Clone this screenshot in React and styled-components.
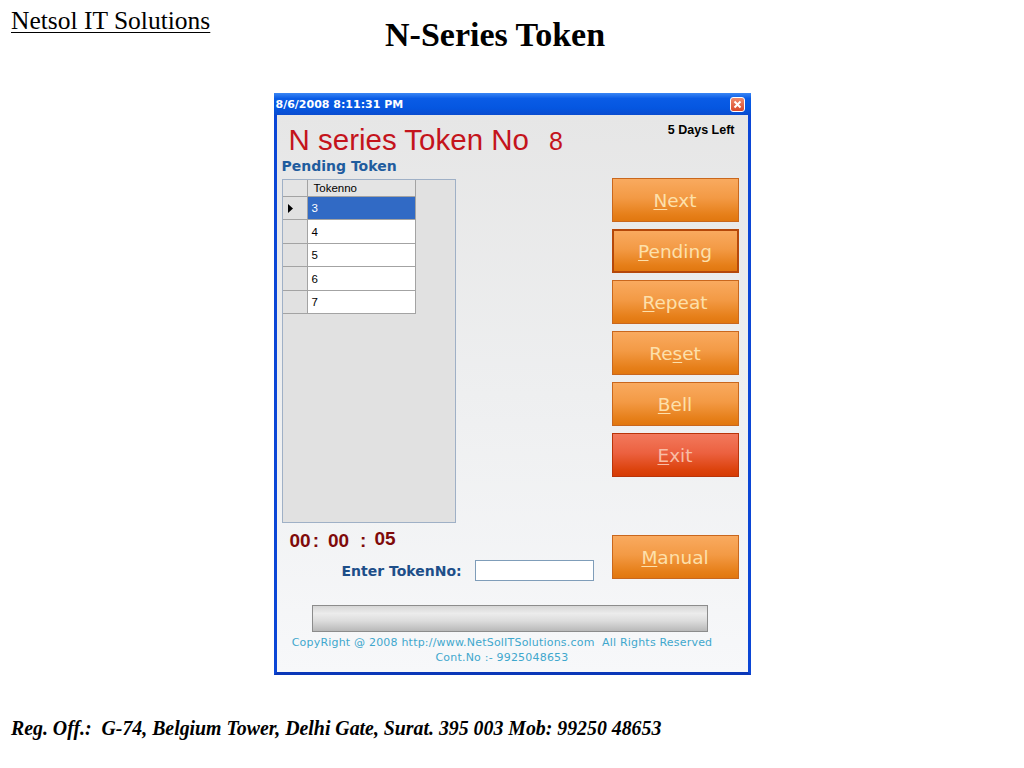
import React from "react";
import styled, { createGlobalStyle, css } from "styled-components";

const GlobalStyle = createGlobalStyle`
  html, body {
    margin: 0;
    padding: 0;
    background: #ffffff;
  }
  * {
    box-sizing: border-box;
  }
`;

const Page = styled.div`
  width: 1024px;
  height: 768px;
  display: flex;
  flex-direction: column;
  overflow: hidden;
`;

const Header = styled.header`
  height: 93px;
  display: flex;
  align-items: flex-start;
`;

const Company = styled.div`
  flex: 0 0 385px;
  padding: 7px 0 0 11px;
  font-family: "Liberation Serif", serif;
  font-size: 25.5px;
  line-height: 28px;
  color: #000;
  text-decoration: underline;
  text-underline-offset: 3px;
  text-decoration-thickness: 1px;
`;

const SlideTitle = styled.h1`
  margin: 0;
  padding-top: 17px;
  font-family: "Liberation Serif", serif;
  font-weight: bold;
  font-size: 34px;
  line-height: 36px;
  color: #000;
`;

const Window = styled.div`
  width: 477px;
  height: 582px;
  margin: 0 auto;
  display: flex;
  flex-direction: column;
  border: 3px solid #0b46d6;
  border-top: none;
  border-bottom-color: #0a37b8;
  background: #0b46d6;
`;

const TitleBar = styled.div`
  height: 22px;
  margin: 0 -3px;
  padding: 0 6px 0 2px;
  display: flex;
  align-items: center;
  justify-content: space-between;
  background: linear-gradient(#3a86f4, #0a5ce6 25%, #0556e0 70%, #0a4ccf);
  font-family: "DejaVu Sans", sans-serif;
  font-weight: bold;
  font-size: 11px;
  color: #ffffff;
`;

const CloseButton = styled.div`
  width: 15px;
  height: 15px;
  border: 1px solid #ffffff;
  border-radius: 3px;
  background: linear-gradient(#f08a6c, #d9482a);
  display: flex;
  align-items: center;
  justify-content: center;
`;

const Body = styled.div`
  flex: 1;
  background: linear-gradient(#e6e6e6, #eeeff0 50%, #f7f8fa);
  display: flex;
  flex-direction: column;
  overflow: hidden;
`;

const TopRow = styled.div`
  display: flex;
  justify-content: space-between;
  align-items: flex-start;
  padding: 0 13px 0 12px;
`;

const Heading = styled.div`
  margin-top: 11px;
  font-family: "Liberation Sans", sans-serif;
  font-size: 29.5px;
  line-height: 28px;
  color: #c4141c;
  display: flex;
  align-items: baseline;
`;

const TokenNumber = styled.span`
  margin-left: 20px;
  font-size: 25px;
`;

const DaysLeft = styled.div`
  margin-top: 8px;
  font-family: "Liberation Sans", sans-serif;
  font-weight: bold;
  font-size: 12.5px;
  line-height: 15px;
  color: #000;
`;

const Main = styled.div`
  margin-top: 3px;
  display: flex;
  justify-content: space-between;
  padding: 0 9px 0 5px;
`;

const LeftCol = styled.div`
  display: flex;
  flex-direction: column;
`;

const SectionLabel = styled.div`
  font-family: "DejaVu Sans", sans-serif;
  font-weight: bold;
  font-size: 14px;
  line-height: 16px;
  color: #1f5c9e;
`;

const GridPanel = styled.div`
  margin-top: 5px;
  width: 174px;
  height: 344px;
  border: 1px solid #9fb0c6;
  background: #e1e1e1;
`;

const GridTable = styled.div`
  display: grid;
  grid-template-columns: 25px 107px;
  width: 133px;
  border-right: 1px solid #a3a3a3;
`;

const Cell = styled.div`
  height: ${(p) => p.$h}px;
  display: flex;
  align-items: center;
  padding-left: ${(p) => (p.$rowHead ? 5 : 4)}px;
  border-bottom: 1px solid #a3a3a3;
  border-right: ${(p) => (p.$rowHead ? "1px solid #a3a3a3" : "none")};
  font-family: "Liberation Sans", sans-serif;
  font-size: 11.5px;
  color: #000;
  background: #ffffff;
  ${(p) =>
    p.$rowHead &&
    css`
      background: #e1e1e1;
    `}
  ${(p) =>
    p.$header &&
    css`
      background: #e4e4e4;
      padding-left: 6px;
    `}
  ${(p) =>
    p.$selected &&
    css`
      background: #316ac5;
      color: #ffffff;
    `}
`;

const Timer = styled.div`
  margin-top: 7px;
  padding-left: 8px;
  display: flex;
  align-items: flex-end;
  font-family: "Liberation Sans", sans-serif;
  font-weight: bold;
  font-size: 19px;
  line-height: 22px;
  color: #7f0a0a;
`;

const TimerPart = styled.span`
  margin-left: ${(p) => p.$gap || 0}px;
  position: relative;
  top: ${(p) => (p.$raised ? -2 : 0)}px;
`;

const EnterRow = styled.div`
  margin-top: 8px;
  margin-left: 60px;
  display: flex;
  align-items: center;
  gap: 13px;
`;

const EnterLabel = styled.label`
  font-family: "DejaVu Sans", sans-serif;
  font-weight: bold;
  font-size: 14px;
  color: #1d4e89;
`;

const TokenInput = styled.input`
  width: 119px;
  height: 21px;
  border: 1px solid #7f9db9;
  background: #ffffff;
  outline: none;
  padding: 0 3px;
`;

const RightCol = styled.div`
  padding-top: 20px;
  display: flex;
  flex-direction: column;
  gap: 7px;
`;

const ActionButton = styled.button`
  width: 127px;
  height: 44px;
  margin-top: ${(p) => p.$offset || 0}px;
  padding: 0;
  border: 1px solid #c9671d;
  background: linear-gradient(#f9aa5f, #f39a45 45%, #e67f19 85%, #e1770f);
  font-family: "DejaVu Sans", sans-serif;
  font-size: 18.5px;
  color: #fde0ab;
  cursor: pointer;
  u {
    text-underline-offset: 2px;
  }
  ${(p) =>
    p.$focused &&
    css`
      border: 2px solid #b5480a;
    `}
  ${(p) =>
    p.$danger &&
    css`
      border-color: #b9340a;
      background: linear-gradient(#f2795c, #ec6140 45%, #dc430d 85%, #d63b05);
      color: #f8bda6;
    `}
`;

const ProgressBar = styled.div`
  margin: 24px 0 0 35px;
  width: 396px;
  height: 27px;
  border: 1px solid #8c8c8c;
  background: linear-gradient(#d6d6d6, #ececec 30%, #dcdcdc 60%, #b9b9b9);
`;

const Copyright = styled.div`
  margin-top: 3px;
  padding-right: 20px;
  text-align: center;
  font-family: "DejaVu Sans", sans-serif;
  font-size: 11px;
  line-height: 15px;
  letter-spacing: 0.2px;
  color: #3fa7cd;
`;

const Footer = styled.footer`
  margin-top: 42px;
  padding-left: 11px;
`;

const Address = styled.div`
  display: inline-block;
  font-family: "Liberation Serif", serif;
  font-weight: bold;
  font-style: italic;
  font-size: 21px;
  line-height: 22px;
  color: #000;
  white-space: pre;
  transform: scaleX(0.944);
  transform-origin: left center;
`;

const tokens = [
  { no: "3", h: 23 },
  { no: "4", h: 24 },
  { no: "5", h: 23 },
  { no: "6", h: 24 },
  { no: "7", h: 23 },
];

const buttons = [
  { label: "Next", u: 0 },
  { label: "Pending", u: 0, focused: true },
  { label: "Repeat", u: 0 },
  { label: "Reset", u: 2 },
  { label: "Bell", u: 0 },
  { label: "Exit", u: 0, danger: true },
];

const Mnemonic = ({ label, u }) => (
  <>
    {label.slice(0, u)}
    <u>{label[u]}</u>
    {label.slice(u + 1)}
  </>
);

const RowArrow = () => (
  <svg width="5" height="9" viewBox="0 0 5 9">
    <path d="M0 0 L5 4.5 L0 9 Z" fill="#000" />
  </svg>
);

export default function App() {
  return (
    <Page>
      <GlobalStyle />
      <Header>
        <Company>Netsol IT Solutions</Company>
        <SlideTitle>N-Series Token</SlideTitle>
      </Header>

      <Window>
        <TitleBar>
          <span>8/6/2008 8:11:31 PM</span>
          <CloseButton>
            <svg width="9" height="9" viewBox="0 0 9 9">
              <path d="M1.5 1.5 L7.5 7.5 M7.5 1.5 L1.5 7.5" stroke="#fff" strokeWidth="2" />
            </svg>
          </CloseButton>
        </TitleBar>

        <Body>
          <TopRow>
            <Heading>
              N series Token No
              <TokenNumber>8</TokenNumber>
            </Heading>
            <DaysLeft>5 Days Left</DaysLeft>
          </TopRow>

          <Main>
            <LeftCol>
              <SectionLabel>Pending Token</SectionLabel>
              <GridPanel>
                <GridTable>
                  <Cell $rowHead $header $h={17} />
                  <Cell $header $h={17}>Tokenno</Cell>
                  {tokens.map((t, i) => (
                    <React.Fragment key={t.no}>
                      <Cell $rowHead $h={t.h}>
                        {i === 0 && <RowArrow />}
                      </Cell>
                      <Cell $h={t.h} $selected={i === 0}>
                        {t.no}
                      </Cell>
                    </React.Fragment>
                  ))}
                </GridTable>
              </GridPanel>

              <Timer>
                <TimerPart>00</TimerPart>
                <TimerPart $gap={2}>:</TimerPart>
                <TimerPart $gap={9}>00</TimerPart>
                <TimerPart $gap={11}>:</TimerPart>
                <TimerPart $gap={8} $raised>05</TimerPart>
              </Timer>

              <EnterRow>
                <EnterLabel>Enter TokenNo:</EnterLabel>
                <TokenInput />
              </EnterRow>
            </LeftCol>

            <RightCol>
              {buttons.map((b) => (
                <ActionButton key={b.label} $focused={b.focused} $danger={b.danger}>
                  <Mnemonic label={b.label} u={b.u} />
                </ActionButton>
              ))}
              <ActionButton $offset={51}>
                <Mnemonic label="Manual" u={0} />
              </ActionButton>
            </RightCol>
          </Main>

          <ProgressBar />

          <Copyright>
            CopyRight @ 2008 http://www.NetSolITSolutions.com&nbsp;&nbsp;All Rights Reserved
            <br />
            Cont.No :- 9925048653
          </Copyright>
        </Body>
      </Window>

      <Footer>
        <Address>{"Reg. Off.:  G-74, Belgium Tower, Delhi Gate, Surat. 395 003 Mob: 99250 48653"}</Address>
      </Footer>
    </Page>
  );
}
